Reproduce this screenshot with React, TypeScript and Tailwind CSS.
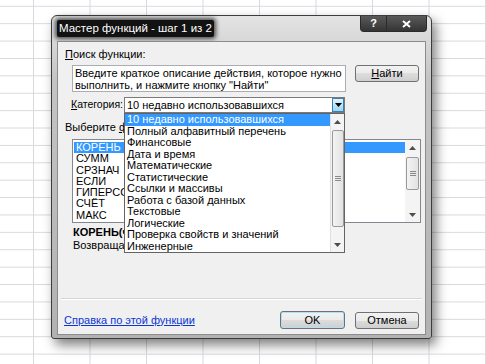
import React from 'react';

const categories = [
  '10 недавно использовавшихся',
  'Полный алфавитный перечень',
  'Финансовые',
  'Дата и время',
  'Математические',
  'Статистические',
  'Ссылки и массивы',
  'Работа с базой данных',
  'Текстовые',
  'Логические',
  'Проверка свойств и значений',
  'Инженерные',
];

const functions = ['КОРЕНЬ', 'СУММ', 'СРЗНАЧ', 'ЕСЛИ', 'ГИПЕРССЫЛКА', 'СЧЁТ', 'МАКС'];

const btn =
  'flex items-center justify-center rounded-[3px] border border-[#707070] bg-[linear-gradient(#f2f2f2_0%,#ebebeb_50%,#dddddd_50%,#cfcfcf_100%)] text-[11px] text-black';

function ArrowUp() {
  return (
    <svg width="7" height="4" viewBox="0 0 7 4">
      <path d="M0 4 L3.5 0 L7 4 Z" fill="#4d4d4d" />
    </svg>
  );
}

function ArrowDown({ color = '#4d4d4d' }: { color?: string }) {
  return (
    <svg width="7" height="4" viewBox="0 0 7 4">
      <path d="M0 0 L7 0 L3.5 4 Z" fill={color} />
    </svg>
  );
}

function Grip() {
  return (
    <div className="flex flex-col gap-[1px]">
      <div className="h-px w-[6px] bg-[#8a8a8a]" />
      <div className="h-px w-[6px] bg-[#8a8a8a]" />
      <div className="h-px w-[6px] bg-[#8a8a8a]" />
    </div>
  );
}

export default function App() {
  return (
    <div className="relative h-[364px] w-[486px] overflow-hidden bg-white bg-[linear-gradient(to_right,#d6d9de_1px,transparent_1px),linear-gradient(to_bottom,#d6d9de_1px,transparent_1px)] bg-size-[56.5px_17.4px] bg-position-[33px_5.8px] pl-[51px] pt-[15px] font-['Liberation_Sans',sans-serif]">
      {/* dialog window */}
      <div className="flex h-[324px] w-[381px] flex-col rounded-t-[6px] rounded-b-[3px] border border-[#3c3c3c] bg-[linear-gradient(#e4e4e4,#c4c4c4_20%,#b2b2b2)] shadow-[4px_6px_12px_rgba(0,0,0,0.5)]">
        {/* title bar */}
        <div className="flex h-[25px] items-start pl-[5px]">
          <div className="mt-[4px] flex h-[17px] items-center rounded-[2px] bg-[#121212] px-[2px] text-[11.5px] text-white shadow-[0_0_4px_2px_rgba(18,18,18,0.7)]">
            Мастер функций - шаг 1 из 2
          </div>
          <div className="mr-[4px] ml-auto flex h-[16px] w-[67px] rounded-b-[4px] border border-t-0 border-[#2a2a2a] bg-[linear-gradient(#5a5a5a,#343434)] text-[11px] font-bold text-white">
            <div className="flex w-[26px] items-center justify-center border-r border-[#2a2a2a]">?</div>
            <div className="flex flex-1 items-center justify-center">
              <svg width="9" height="8" viewBox="0 0 9 8">
                <path d="M1 1 L8 7 M8 1 L1 7" stroke="white" strokeWidth="2" />
              </svg>
            </div>
          </div>
        </div>

        {/* client area */}
        <div className="relative mx-[5px] flex h-[294px] flex-col border border-[#8c8c8c] bg-[#f0f0f0] text-[11px] text-black">
          <div className="h-[23px] pt-[5px] pl-[7px] leading-[14px]">
            <u>П</u>оиск функции:
          </div>

          <div className="flex h-[28px] pl-[14px]">
            <div className="h-[27px] w-[274px] border border-[#abadb3] bg-white px-[2px] pt-[1px] leading-[12px]">
              Введите краткое описание действия, которое нужно выполнить, и нажмите кнопку "Найти"
            </div>
            <div className={`${btn} ml-[9px] h-[17px] w-[64px]`}>
              <span>
                <u>Н</u>айти
              </span>
            </div>
          </div>

          <div className="mt-[4px] flex h-[16px] items-center">
            <div className="w-[66px] pl-[13px] text-[10.5px]">
              <u>К</u>атегория:
            </div>
            <div className="flex h-[16px] w-[221px] items-center border border-[#7a7a7a] bg-white">
              <div className="flex-1 pl-[2px]">10 недавно использовавшихся</div>
              <div className="flex h-[14px] w-[12px] items-center justify-center border border-[#3c7fb1] bg-[linear-gradient(#e3f4fc,#bde5fa_50%,#9fd5f3)]">
                <ArrowDown color="#000" />
              </div>
            </div>
          </div>

          <div className="mt-[7px] h-[14px] w-[66px] overflow-hidden pl-[7px] leading-[14px] whitespace-nowrap">
            Выберите <u>ф</u>ункцию:
          </div>

          {/* function list */}
          <div className="mt-[5px] ml-[14px] flex h-[84px] w-[349px] border border-[#828790] bg-white">
            <div className="flex-1 pt-[2px] pl-[1px]">
              {functions.map((f, i) => (
                <div
                  key={f}
                  className={`h-[11.3px] pl-[2px] leading-[11.3px] ${i === 0 ? 'bg-[#3399ff] text-white' : ''}`}
                >
                  <div className="w-[48px] overflow-hidden whitespace-nowrap">{f}</div>
                </div>
              ))}
            </div>
            <div className="flex w-[15px] flex-col items-center bg-[#f4f4f4]">
              <div className="flex h-[16px] items-center">
                <ArrowUp />
              </div>
              <div className="mt-[1px] flex h-[33px] w-[13px] items-center justify-center rounded-[2px] border border-[#9a9a9a] bg-[linear-gradient(to_right,#f3f3f3,#e2e2e2)]">
                <Grip />
              </div>
              <div className="flex-1" />
              <div className="flex h-[14px] items-center">
                <ArrowDown />
              </div>
            </div>
          </div>

          <div className="mt-[3px] h-[13px] w-[66px] overflow-hidden pl-[15px] leading-[13px] font-bold whitespace-nowrap">
            КОРЕНЬ(число)
          </div>
          <div className="h-[13px] w-[66px] overflow-hidden pl-[15px] leading-[13px] whitespace-nowrap">
            Возвращает значение квадратного корня.
          </div>

          <div className="mx-[3px] mt-[46px] h-[2px] border-t border-b border-t-[#d5d5d5] border-b-white" />

          <div className="mt-[11px] flex h-[18px] items-center pr-[6px] pl-[6px]">
            <span className="text-[#0b35d4] underline">Справка по этой функции</span>
            <div className="flex-1" />
            <div className={`${btn} h-[18px] w-[65px] border-[#3c7fb1] shadow-[inset_0_0_0_1px_#aee0f8]`}>OK</div>
            <div className={`${btn} ml-[10px] h-[17px] w-[64px]`}>Отмена</div>
          </div>

          {/* opened category dropdown */}
          <div className="absolute top-[71px] left-[66px] flex h-[140px] w-[221px] border border-[#646464] bg-white">
            <div className="flex-1">
              {categories.map((c, i) => (
                <div
                  key={c}
                  className={`h-[11.5px] pl-[2px] leading-[11.5px] ${i === 0 ? 'bg-[#3399ff] text-white' : ''}`}
                >
                  {c}
                </div>
              ))}
            </div>
            <div className="flex w-[14px] flex-col items-center border-l border-[#e0e0e0] bg-[#f4f4f4]">
              <div className="flex h-[16px] items-center">
                <ArrowUp />
              </div>
              <div className="flex h-[97px] w-[12px] items-center justify-center rounded-[2px] border border-[#9a9a9a] bg-[linear-gradient(to_right,#f3f3f3,#e2e2e2)]">
                <Grip />
              </div>
              <div className="flex-1" />
              <div className="flex h-[14px] items-center">
                <ArrowDown />
              </div>
            </div>
          </div>
        </div>
      </div>
    </div>
  );
}
